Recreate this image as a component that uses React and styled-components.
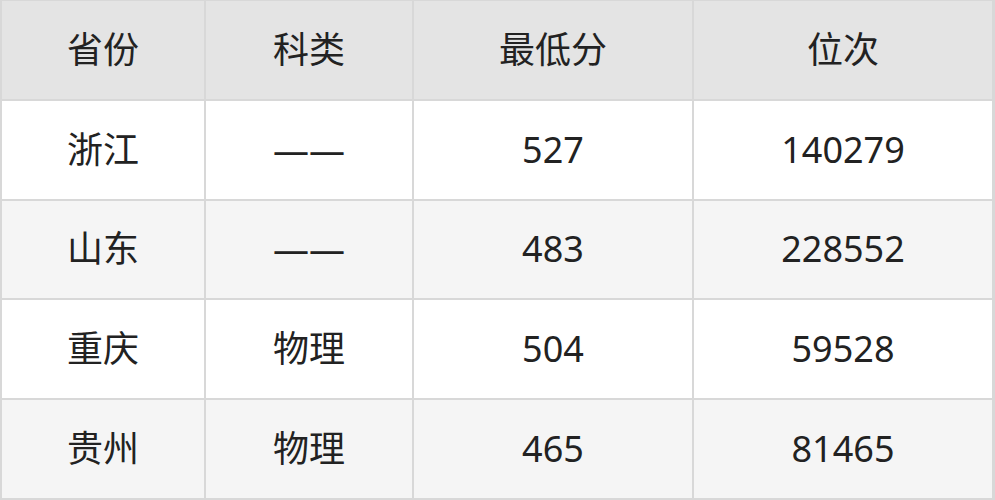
import React from "react";
import styled, { createGlobalStyle } from "styled-components";

const GlobalStyle = createGlobalStyle`
  html, body {
    margin: 0;
    padding: 0;
    background: #ffffff;
  }
  body {
    font-family: "Noto Sans", "Noto Sans CJK SC", sans-serif;
  }
`;

const Table = styled.div`
  width: 995px;
  height: 500px;
  box-sizing: border-box;
  display: grid;
  grid-template-columns: 202px 206px 278px 298px;
  grid-template-rows: repeat(5, 1fr);
  gap: 2px;
  padding: 1px 3px 2px 2px;
  background: #d8d8d8;
`;

const Cell = styled.div`
  display: flex;
  align-items: center;
  justify-content: center;
  background: ${(p) => (p.$head ? "#e4e4e4" : p.$alt ? "#f5f5f5" : "#ffffff")};
  color: #222222;
  font-size: 36px;
  line-height: 1;
`;

const header = ["省份", "科类", "最低分", "位次"];

const rows = [
  ["浙江", "——", "527", "140279"],
  ["山东", "——", "483", "228552"],
  ["重庆", "物理", "504", "59528"],
  ["贵州", "物理", "465", "81465"],
];

export default function App() {
  return (
    <>
      <GlobalStyle />
      <Table>
        {header.map((h) => (
          <Cell key={h} $head>
            {h}
          </Cell>
        ))}
        {rows.map((row, i) =>
          row.map((v, j) => (
            <Cell key={`${i}-${j}`} $alt={i % 2 === 1}>
              {v}
            </Cell>
          ))
        )}
      </Table>
    </>
  );
}
